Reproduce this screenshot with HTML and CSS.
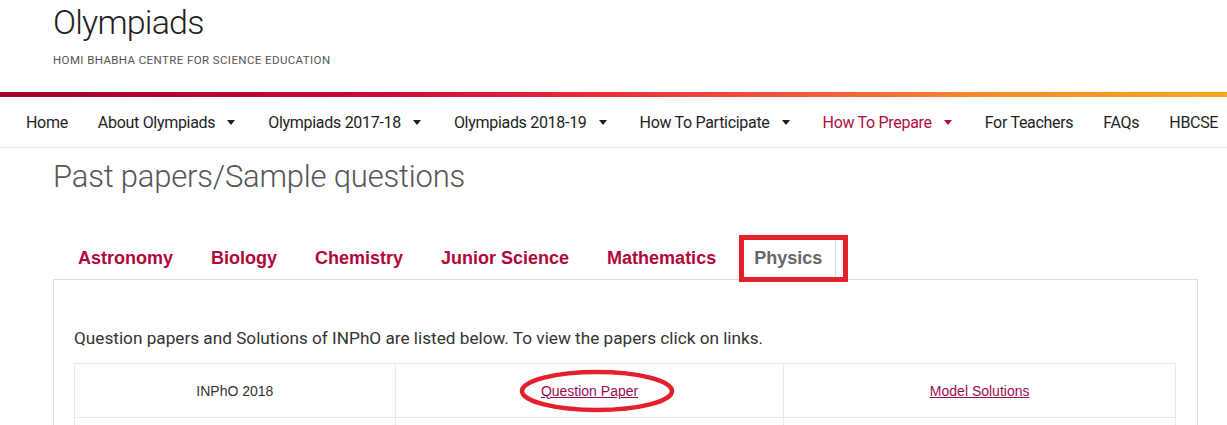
FILE: index.html
```html
<!DOCTYPE html>
<html lang="en">
<head>
<meta charset="utf-8">
<title>Olympiads - Past papers</title>
<link rel="stylesheet" href="styles.css">
</head>
<body>
<header class="site-header">
  <div class="brand">
    <div class="brand-title">Olympiads</div>
    <div class="brand-sub">HOMI BHABHA CENTRE FOR SCIENCE EDUCATION</div>
  </div>
  <div class="grad-bar"></div>
  <nav class="main-nav">
    <ul class="nav-list">
      <li class="nav-item"><a href="#">Home</a></li>
      <li class="nav-item has-drop"><a href="#">About Olympiads</a><svg class="caret" viewBox="0 0 8 5" width="8" height="5"><polygon points="0,0 8,0 4,5"/></svg></li>
      <li class="nav-item has-drop"><a href="#">Olympiads 2017-18</a><svg class="caret" viewBox="0 0 8 5" width="8" height="5"><polygon points="0,0 8,0 4,5"/></svg></li>
      <li class="nav-item has-drop"><a href="#">Olympiads 2018-19</a><svg class="caret" viewBox="0 0 8 5" width="8" height="5"><polygon points="0,0 8,0 4,5"/></svg></li>
      <li class="nav-item has-drop"><a href="#">How To Participate</a><svg class="caret" viewBox="0 0 8 5" width="8" height="5"><polygon points="0,0 8,0 4,5"/></svg></li>
      <li class="nav-item has-drop active"><a href="#">How To Prepare</a><svg class="caret" viewBox="0 0 8 5" width="8" height="5"><polygon points="0,0 8,0 4,5"/></svg></li>
      <li class="nav-item"><a href="#">For Teachers</a></li>
      <li class="nav-item"><a href="#">FAQs</a></li>
      <li class="nav-item"><a href="#">HBCSE</a></li>
    </ul>
  </nav>
</header>

<main class="page">
  <h1 class="page-title">Past papers/Sample questions</h1>
  <ul class="tabs">
    <li class="tab"><a href="#">Astronomy</a></li>
    <li class="tab"><a href="#">Biology</a></li>
    <li class="tab"><a href="#">Chemistry</a></li>
    <li class="tab"><a href="#">Junior Science</a></li>
    <li class="tab"><a href="#">Mathematics</a></li>
    <li class="tab tab-active"><a href="#">Physics</a></li>
  </ul>
  <div class="tab-panel">
    <p class="intro">Question papers and Solutions of INPhO are listed below. To view the papers click on links.</p>
    <table class="papers">
      <tr>
        <td class="c1">INPhO 2018</td>
        <td class="c2"><a href="#">Question Paper</a></td>
        <td class="c3"><a href="#">Model Solutions</a></td>
      </tr>
      <tr>
        <td class="c1"></td>
        <td class="c2"></td>
        <td class="c3"></td>
      </tr>
    </table>
  </div>
</main>

<div class="mark mark-rect"></div>
<svg class="mark mark-ellipse" width="160" height="48" viewBox="0 0 160 48">
  <ellipse cx="80" cy="24" rx="75" ry="19" fill="none" stroke="#e3202b" stroke-width="4.5"/>
</svg>
</body>
</html>
```

FILE: styles.css
```css
* { box-sizing: border-box; }

html, body {
  margin: 0;
  padding: 0;
  background: #ffffff;
  overflow: hidden;
}

body {
  font-family: "Roboto", "Liberation Sans", sans-serif;
  color: #222;
}

a { text-decoration: none; color: inherit; }

.brand {
  padding-left: 53px;
}

.brand-title {
  font-size: 34px;
  line-height: 44px;
  font-weight: 300;
  letter-spacing: -0.8px;
  color: #1e1e1e;
}

.brand-sub {
  margin-top: 9px;
  font-size: 11.5px;
  line-height: 15px;
  letter-spacing: 0.4px;
  color: #555;
}

.grad-bar {
  margin-top: 24px;
  height: 5px;
  background: linear-gradient(to right, #a3002e 0%, #c80a36 30%, #e0263b 45%, #f0573a 65%, #f58a2c 80%, #f7a522 100%);
}

.main-nav {
  border-bottom: 1px solid #e6e6e6;
}

.nav-list {
  display: flex;
  align-items: center;
  height: 50px;
  margin: 0;
  padding: 0 0 0 11px;
  list-style: none;
}

.nav-item {
  display: flex;
  align-items: center;
  padding: 0 15px;
  font-size: 16px;
  letter-spacing: -0.3px;
  color: #1e1e1e;
  white-space: nowrap;
}

.nav-item.has-drop { padding-right: 18px; }

.nav-item.active { color: #b10c3e; }

.caret {
  margin-left: 12px;
  fill: #1e1e1e;
}

.nav-item.active .caret { fill: #b10c3e; }

.page {
  padding: 0 30px 0 53px;
}

.page-title {
  margin: 7.5px 0 0 0;
  font-size: 31px;
  line-height: 42px;
  font-weight: 300;
  letter-spacing: -0.2px;
  color: #555;
}

.tabs {
  display: flex;
  margin: 39.5px 0 0 0;
  padding: 0 0 0 11px;
  list-style: none;
  position: relative;
  z-index: 1;
}

.tab {
  margin-right: 10px;
  border: 1px solid transparent;
  border-bottom: none;
}

.tab a {
  display: block;
  padding: 10px 13px 11px;
  font-family: "Liberation Sans", Arial, sans-serif;
  font-weight: bold;
  font-size: 18px;
  line-height: 20px;
  color: #b1063a;
}

.tab-active {
  border-color: #dddddd;
  background: #fff;
  margin-bottom: -1px;
  padding-bottom: 1px;
}

.tab-active a { color: #666; }

.tab-panel {
  width: 1145px;
  border: 1px solid #dddddd;
  padding: 47px 20px 40px 20px;
}

.intro {
  margin: 0 0 14px 0;
  font-size: 17.2px;
  line-height: 22px;
  color: #333;
}

.papers {
  width: 1102px;
  border-collapse: collapse;
  font-family: "Liberation Sans", Arial, sans-serif;
  font-size: 14px;
  color: #333;
}

.papers td {
  height: 54px;
  border: 1px solid #e8e8e8;
  text-align: center;
  vertical-align: middle;
  padding: 0;
}

.papers .c1 { width: 321px; }
.papers .c2 { width: 389px; }
.papers .c3 { width: 392px; }

.papers a {
  color: #9a0d52;
  text-decoration: underline;
}

.mark { position: absolute; pointer-events: none; }

.mark-rect {
  left: 739px;
  top: 235px;
  width: 109px;
  height: 47px;
  border: 5px solid #e3202b;
  z-index: 5;
}

.mark-ellipse {
  left: 517px;
  top: 367px;
  z-index: 5;
}
```
